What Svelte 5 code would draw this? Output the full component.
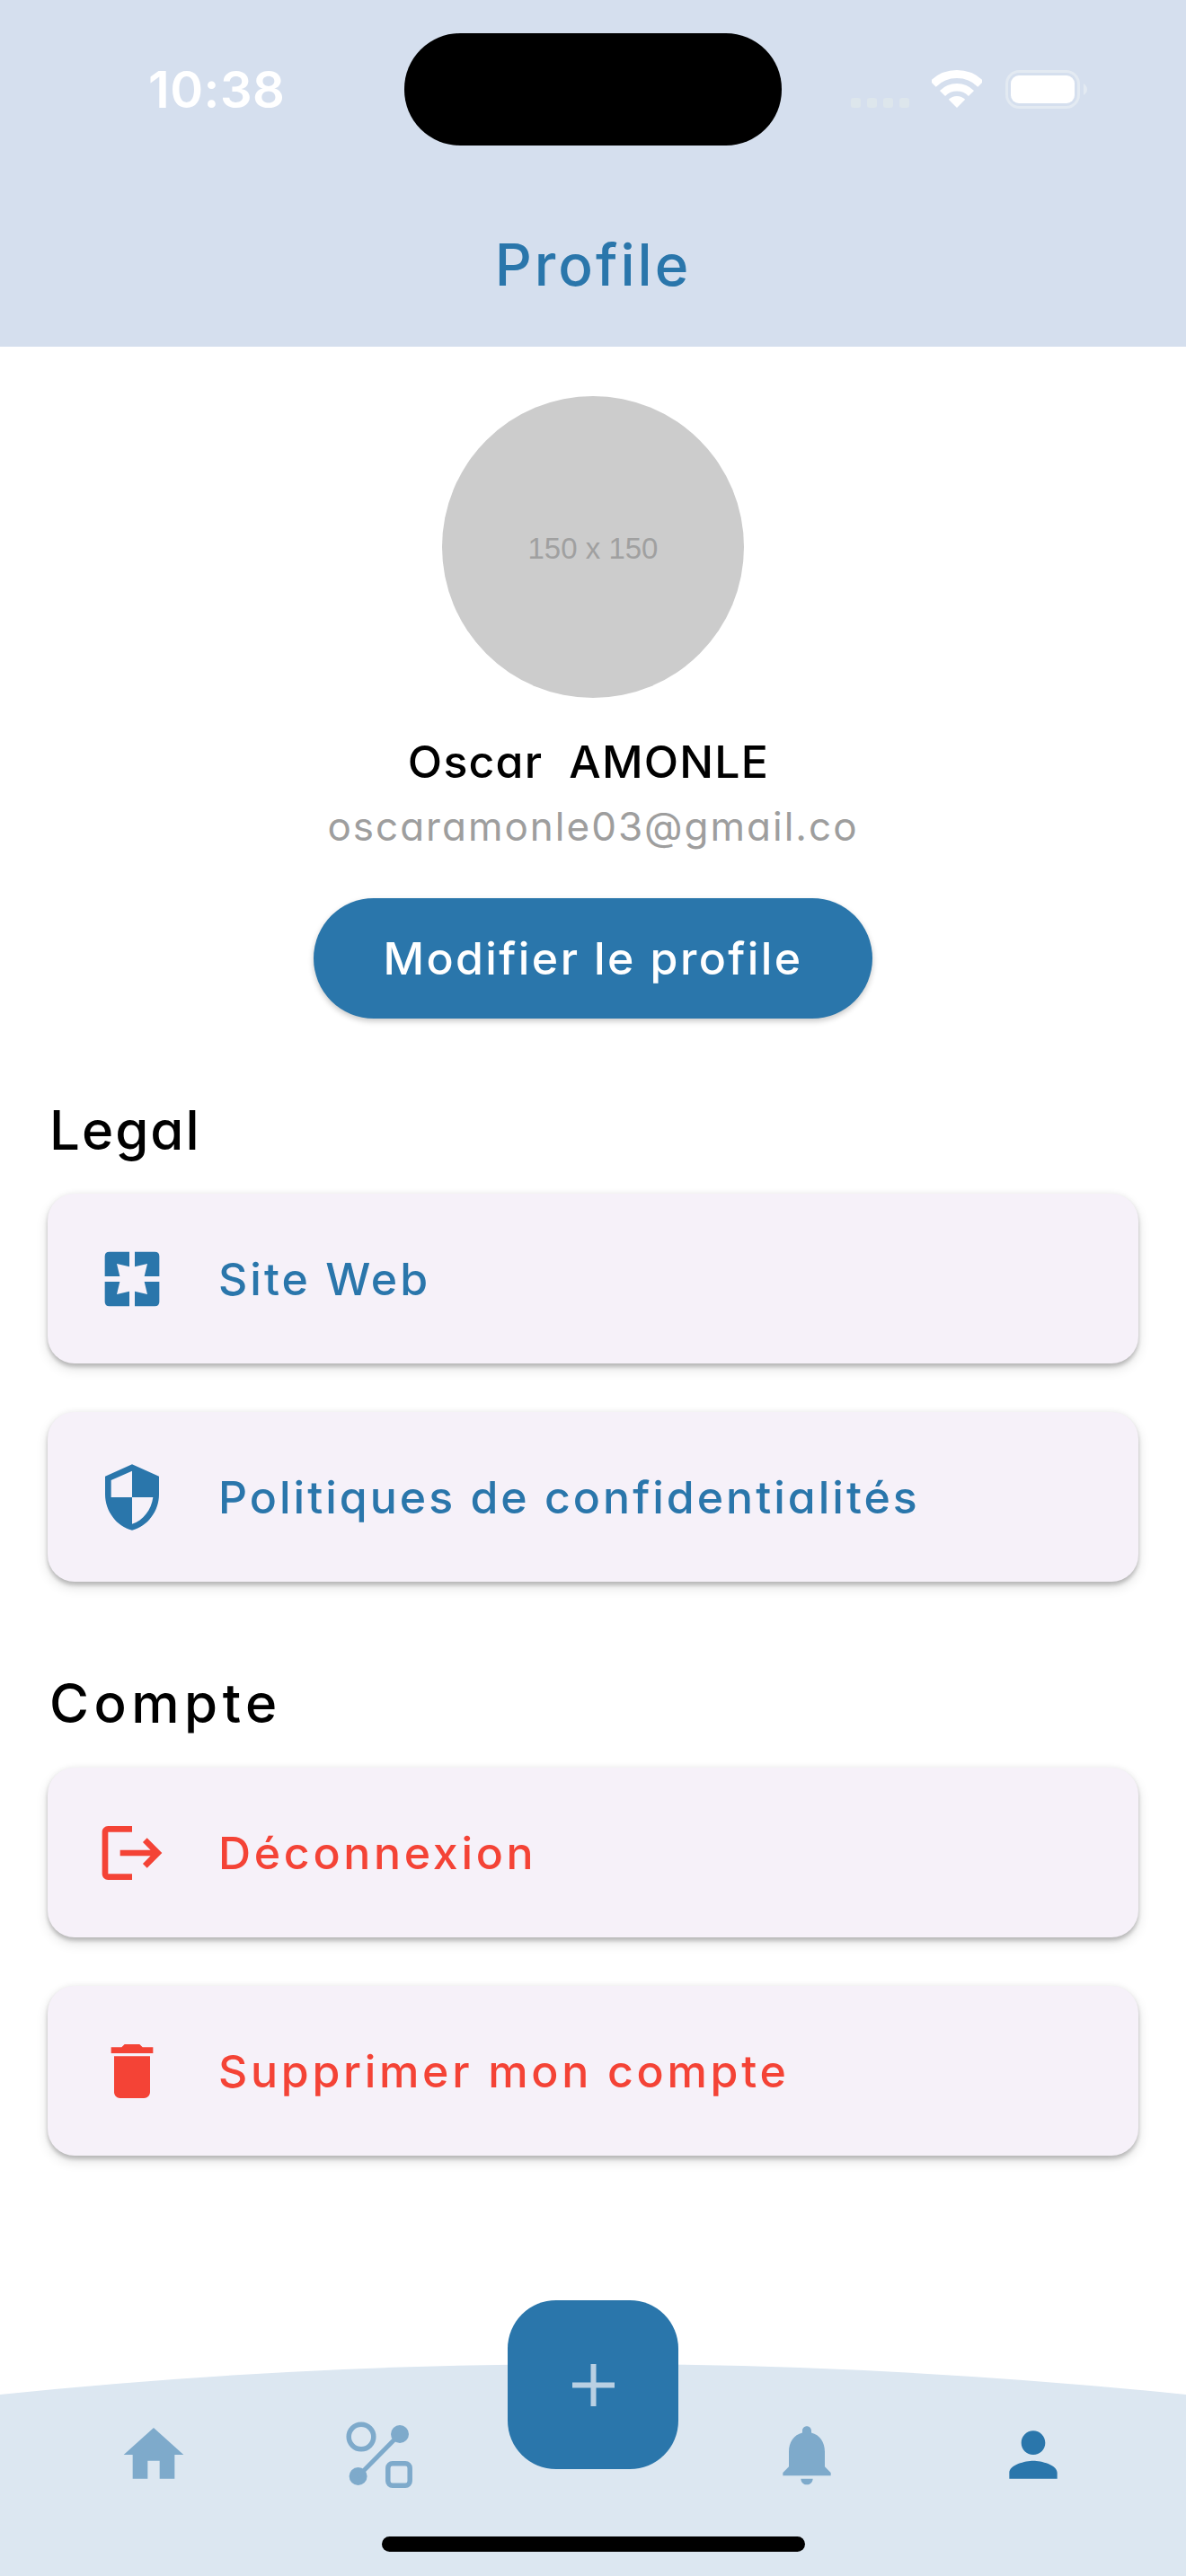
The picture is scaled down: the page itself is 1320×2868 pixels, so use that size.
<script>
  const legal = [
    {
      label: 'Site Web',
      box: '-29 -29 240 240',
      d: 'M15 0H82V50L40 40L50 82H0V15Q0 0 15 0ZM100 0H167Q182 0 182 15V82H132L142 40L100 50ZM0 100H50L40 142L82 132V182H15Q0 182 0 167ZM100 132L142 142L132 100H182V167Q182 182 167 182H100Z'
    },
    {
      label: 'Politiques de confidentialités',
      box: '0 0 24 24',
      d: 'M12 1L3 5v6c0 5.55 3.84 10.74 9 12 5.16-1.26 9-6.45 9-12V5l-9-4zm0 10.99h7c-.53 4.12-3.28 7.79-7 8.94V12H5V6.3l7-3.11v8.8z'
    }
  ];

  const account = [
    {
      label: 'Déconnexion',
      box: '0 0 24 24',
      d: 'M17 7l-1.41 1.41L18.17 11H8v2h10.17l-2.58 2.58L17 17l5-5zM4 5h8V3H4c-1.1 0-2 .9-2 2v14c0 1.1.9 2 2 2h8v-2H4V5z'
    },
    {
      label: 'Supprimer mon compte',
      box: '0 0 24 24',
      d: 'M6 19c0 1.1.9 2 2 2h8c1.1 0 2-.9 2-2V7H6v12zM19 4h-3.5l-1-1h-5l-1 1H5v2h14V4z'
    }
  ];
</script>

{#snippet row(item, danger)}
  <button class="row" class:danger>
    <svg class="row-icon" viewBox={item.box} width="80" height="80" fill="currentColor"><path d={item.d} /></svg>
    <span>{item.label}</span>
  </button>
{/snippet}

<div class="page">
  <header>
    <div class="status">
      <span class="time">10:38</span>
      <div class="island"></div>
      <div class="signals">
        <div class="dots"><i></i><i></i><i></i><i></i></div>
        <svg class="wifi" width="56" height="42" viewBox="0 0 56 42" fill="none" stroke="#fff">
          <path d="M1.5 15.5A37.5 37.5 0 0 1 54.5 15.5" stroke-width="9" />
          <path d="M12 26A22.5 22.5 0 0 1 44 26" stroke-width="8.5" />
          <path d="M28 42L18.8 32.8A13 13 0 0 1 37.2 32.8Z" fill="#fff" stroke="none" />
        </svg>
        <svg class="battery" width="91" height="43" viewBox="0 0 91 43">
          <rect x="1.5" y="1.5" width="80" height="40" rx="14" fill="none" stroke="#e3eaf2" stroke-width="3" />
          <rect x="6" y="6" width="71" height="31" rx="9" fill="#fff" />
          <path d="M87 15Q91 18 91 21.5T87 28Z" fill="#e3eaf2" />
        </svg>
      </div>
    </div>
    <h1>Profile</h1>
  </header>

  <main>
    <section class="user">
      <div class="avatar">150 x 150</div>
      <div class="name">Oscar  AMONLE</div>
      <div class="email">oscaramonle03@gmail.co</div>
      <button class="edit">Modifier le profile</button>
    </section>

    <h2 class="legal">Legal</h2>
    <div class="rows">
      {#each legal as item}
        {@render row(item, false)}
      {/each}
    </div>

    <h2 class="account">Compte</h2>
    <div class="rows">
      {#each account as item}
        {@render row(item, true)}
      {/each}
    </div>
  </main>

  <div class="nav-wrap">
    <nav>
      <div class="tabs">
        <svg viewBox="0 0 24 24" width="80" height="80" fill="#7eaacb"><path d="M10 20v-6h4v6h5v-8h3L12 3 2 12h3v8z" /></svg>
        <svg viewBox="0 0 80 80" width="80" height="80" fill="#7eaacb">
          <circle cx="20" cy="20" r="13.8" fill="none" stroke="#7eaacb" stroke-width="5.5" />
          <circle cx="63" cy="17" r="10" />
          <circle cx="16.6" cy="64" r="10" />
          <path d="M63 17L16.6 64" stroke="#7eaacb" stroke-width="5" />
          <rect x="49.8" y="49.8" width="24.4" height="24.4" rx="5" fill="none" stroke="#7eaacb" stroke-width="5.5" />
        </svg>
        <div></div>
        <svg viewBox="0 0 24 24" width="80" height="80" fill="#7eaacb"><path d="M12 22c1.1 0 2-.9 2-2h-4c0 1.1.89 2 2 2zm6-6v-5c0-3.07-1.64-5.64-4.5-6.32V4c0-.83-.67-1.5-1.5-1.5s-1.5.67-1.5 1.5v.68C7.63 5.36 6 7.92 6 11v5l-2 2v1h16v-1l-2-2z" /></svg>
        <svg viewBox="0 0 24 24" width="80" height="80" fill="#2a76ab"><path d="M12 12c2.21 0 4-1.79 4-4s-1.79-4-4-4-4 1.79-4 4 1.79 4 4 4zm0 2c-2.67 0-8 1.34-8 4v2h16v-2c0-2.66-5.33-4-8-4z" /></svg>
      </div>
      <div class="home-bar"></div>
    </nav>
    <button class="fab" aria-label="Ajouter">
      <svg width="47" height="47" viewBox="0 0 47 47" fill="#b9d0e3"><path d="M20.5 0h6v20.5H47v6H26.5V47h-6V26.5H0v-6h20.5z" /></svg>
    </button>
  </div>
</div>

<style>
  :global(body) {
    margin: 0;
    background: #fff;
  }

  .page {
    min-height: 2868px;
    display: flex;
    flex-direction: column;
    font-family: Inter, "Liberation Sans", sans-serif;
    font-feature-settings: "cv11";
    overflow: hidden;
  }

  header {
    height: 386px;
    background: #d5dfee;
    box-sizing: border-box;
    padding-top: 37px;
  }

  .status {
    height: 125px;
    display: flex;
    align-items: center;
  }

  .time {
    width: 285px;
    margin-left: 165px;
    color: #fff;
    font-size: 56px;
    font-weight: 600;
    letter-spacing: 0.5px;
    font-feature-settings: normal;
  }

  .island {
    width: 420px;
    height: 125px;
    border-radius: 62px;
    background: #000;
  }

  .signals {
    margin-left: 77px;
    display: flex;
    align-items: flex-end;
    height: 43px;
  }

  .dots {
    display: flex;
    gap: 7px;
    margin-bottom: 1px;
  }

  .dots i {
    width: 11px;
    height: 11px;
    border-radius: 3px;
    background: #dde6ec;
  }

  .wifi {
    margin-left: 25px;
    margin-bottom: 1px;
  }

  .battery {
    margin-left: 26px;
  }

  h1 {
    margin: 93px 0 0;
    text-align: center;
    color: #2a76ab;
    font-size: 64px;
    line-height: 80px;
    font-weight: 500;
    letter-spacing: 3px;
  }

  main {
    padding: 0 53px;
  }

  .user {
    display: flex;
    flex-direction: column;
    align-items: center;
  }

  .avatar {
    width: 336px;
    height: 336px;
    margin-top: 55px;
    padding-top: 4px;
    border-radius: 50%;
    background: #ccc;
    color: #a0a0a0;
    font: 33px "Liberation Sans", sans-serif;
    display: flex;
    align-items: center;
    justify-content: center;
    box-sizing: border-box;
  }

  .name {
    margin-top: 41px;
    padding-right: 10px;
    color: #000;
    font-size: 50px;
    line-height: 60px;
    font-weight: 500;
    white-space: pre;
    letter-spacing: 1.2px;
  }

  .email {
    margin-top: 12px;
    color: #9e9e9e;
    font-size: 44px;
    line-height: 60px;
    letter-spacing: 2px;
  }

  .edit {
    margin-top: 50px;
    width: 622px;
    height: 134px;
    border: none;
    border-radius: 67px;
    background: #2a76ab;
    color: #fff;
    font: inherit;
    font-size: 50px;
    font-weight: 500;
    letter-spacing: 2.4px;
    box-shadow: 0 3px 6px rgba(0, 0, 0, 0.22);
  }

  h2 {
    margin: 0;
    padding-left: 2px;
    color: #000;
    font-size: 60px;
    line-height: 60px;
    font-weight: 500;
  }

  .legal {
    margin-top: 94px;
    letter-spacing: 2px;
  }

  .account {
    margin-top: 105px;
    letter-spacing: 5.5px;
  }

  .legal + .rows {
    margin-top: 41px;
  }

  .rows {
    display: flex;
    flex-direction: column;
    gap: 54px;
    margin-top: 42px;
  }

  .row {
    height: 189px;
    display: flex;
    align-items: center;
    gap: 56px;
    padding: 0 0 0 54px;
    border: none;
    border-radius: 30px;
    background: #f6f1f9;
    color: #2a76ab;
    font: inherit;
    font-size: 50px;
    font-weight: 500;
    letter-spacing: 3px;
    box-shadow: 0 4px 4px rgba(0, 0, 0, 0.18), 0 6px 14px rgba(0, 0, 0, 0.12), 0 0 6px rgba(0, 0, 0, 0.06);
  }

  .row.danger {
    color: #f44336;
    letter-spacing: 3.7px;
  }

  .row-icon {
    flex: none;
  }

  .nav-wrap {
    position: relative;
    margin-top: auto;
    height: 237px;
  }

  nav {
    height: 100%;
    box-sizing: border-box;
    padding-top: 62px;
    display: flex;
    flex-direction: column;
    background: #dce7f1;
    clip-path: path("M0 35Q660 -33 1320 35V237H0Z");
  }

  .tabs {
    display: grid;
    grid-template-columns: 251px 238px 238px 252px 80px;
    padding-left: 131px;
    height: 80px;
  }

  .home-bar {
    align-self: center;
    width: 471px;
    height: 17px;
    margin-top: 51px;
    border-radius: 9px;
    background: #000;
  }

  .fab {
    position: absolute;
    left: 565px;
    top: -70px;
    width: 190px;
    height: 188px;
    padding: 0;
    border: none;
    border-radius: 54px;
    background: #2a76ab;
    display: flex;
    align-items: center;
    justify-content: center;
  }
</style>
